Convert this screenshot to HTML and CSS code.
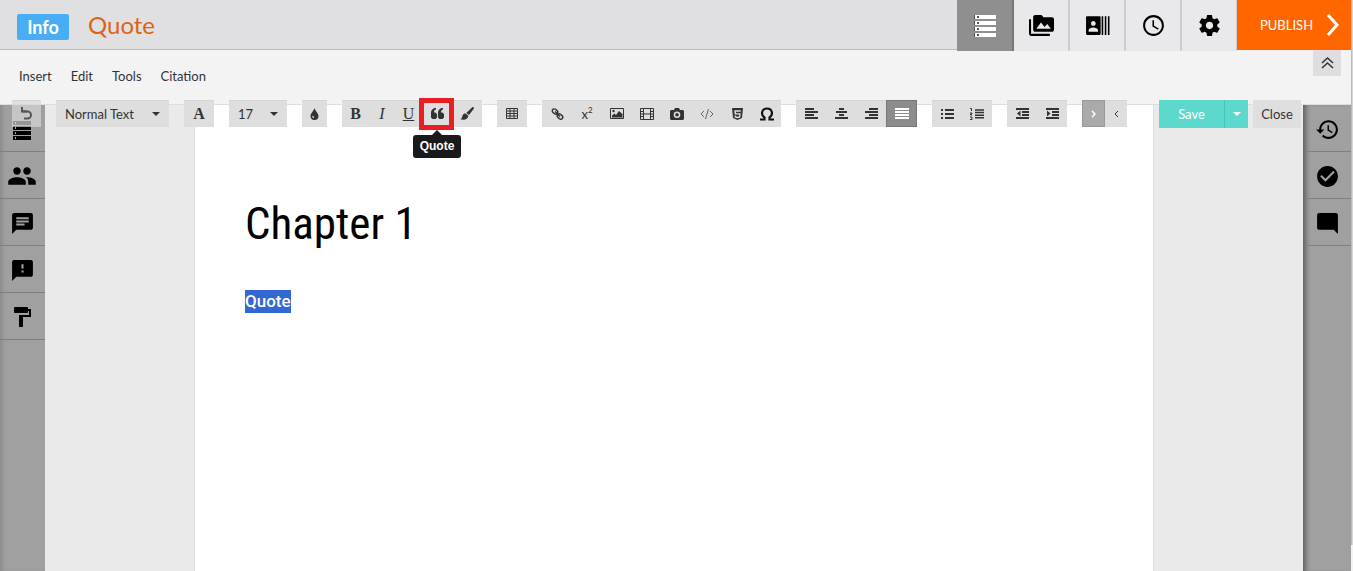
FILE: index.html
```html
<!DOCTYPE html>
<html lang="en">
<head>
  <meta charset="UTF-8" />
  <meta name="viewport" content="width=device-width, initial-scale=1.0"/>
  <title>Quote</title>
  <link rel="stylesheet" href="styles.css">
</head>
<body>
  <div class="app">
    <header class="topbar">
      <button class="info">Info</button>
      <h1>Quote</h1>
      <nav class="tabs">
        <button class="tab active" aria-label="Structure">
          <svg width="24" height="24" viewBox="0 0 24 24"><path d="M1 1h22v4H1zM1 7h22v4H1zM1 13h22v4H1zM1 19h22v4H1z"/><path fill="#555" d="M1 1h1v4H1zM1 7h1v4H1zM1 13h1v4H1zM1 19h1v4H1zM4 2h2v2H4zM4 8h2v2H4zM4 14h2v2H4zM4 20h2v2H4z"/></svg>
        </button>
        <button class="tab" aria-label="Media">
          <svg width="25" height="25" viewBox="0 0 24 24"><path d="M2 6H0v14c0 1.1.9 2 2 2h18v-2H2V6zm20-2h-8l-2-2H6c-1.1 0-2 .9-2 2v12c0 1.1.9 2 2 2h16c1.1 0 2-.9 2-2V6c0-1.1-.9-2-2-2zM7 15l4.5-6 3.5 4.51 2.5-3.01L21 15H7z"/></svg>
        </button>
        <button class="tab" aria-label="Contributors">
          <svg width="25" height="25" viewBox="0 0 24 24"><path d="M22 3v18h1.500V3zM19 3v18h1.500V3zM16 3v18h1.500V3zM14 3H2c-.55 0-1 .45-1 1v16c0 .55.45 1 1 1h12c.55 0 1-.45 1-1V4c0-.55-.45-1-1-1zM8 7.750c1.240 0 2.250 1 2.250 2.250S9.240 12.250 8 12.250 5.750 11.240 5.750 10 6.760 7.750 8 7.750zM12.500 18h-9v-1.500c0-1.500 3-2.500 4.500-2.500s4.500 1 4.500 2.500z"/></svg>
        </button>
        <button class="tab" aria-label="History">
          <svg width="25" height="25" viewBox="0 0 24 24"><path d="M12 2C6.480 2 2 6.480 2 12s4.480 10 10 10 10-4.480 10-10S17.520 2 12 2zm0 18c-4.420 0-8-3.580-8-8s3.580-8 8-8 8 3.580 8 8-3.580 8-8 8zM12.500 7H11v6l5.250 3.150.750-1.230-4.500-2.670z"/></svg>
        </button>
        <button class="tab" aria-label="Settings">
          <svg width="25" height="25" viewBox="0 0 24 24"><path d="M19.430 12.980c.04-.32.07-.64.07-.98s-.03-.66-.07-.98l2.110-1.650c.19-.15.24-.42.12-.64l-2-3.460c-.12-.22-.39-.3-.61-.22l-2.490 1c-.52-.4-1.080-.73-1.690-.98l-.38-2.650C14.460 2.180 14.250 2 14 2h-4c-.25 0-.46.18-.49.42l-.38 2.650c-.61.25-1.170.59-1.690.98l-2.490-1c-.23-.09-.49 0-.61.22l-2 3.460c-.13.22-.07.49.12.64l2.110 1.650c-.04.32-.07.65-.07.98s.03.66.07.98l-2.110 1.650c-.19.15-.24.42-.12.64l2 3.460c.12.22.39.3.61.22l2.490-1c.52.4 1.080.73 1.690.98l.38 2.650c.03.24.24.42.49.42h4c.25 0 .46-.18.49-.42l.38-2.650c.61-.25 1.170-.59 1.690-.98l2.490 1c.23.09.49 0 .61-.22l2-3.460c.12-.22.07-.49-.12-.64l-2.110-1.650zM12 15.500c-1.930 0-3.500-1.570-3.500-3.500s1.570-3.500 3.500-3.500 3.500 1.570 3.500 3.500-1.570 3.500-3.500 3.500z"/></svg>
        </button>
      </nav>
      <button class="publish">PUBLISH
        <svg width="14" height="24" viewBox="0 0 14 24"><path class="line" stroke-width="3" d="M2 2l9 10-9 10"/></svg>
      </button>
    </header>

    <nav class="menubar">
      <a href="#">Insert</a>
      <a href="#">Edit</a>
      <a href="#">Tools</a>
      <a href="#">Citation</a>
      <button class="collapse" aria-label="Collapse">
        <svg width="13" height="12" viewBox="0 0 13 12"><path class="line" stroke-width="1.500" d="M1 6l5.500-5L12 6M1 11l5.500-5 5.500 5"/></svg>
      </button>
    </nav>

    <div class="workspace">
      <div class="toolbar">
        <div class="group undo">
          <button aria-label="Undo"><svg width="12" height="13" viewBox="0 0 12 13"><path class="line" stroke-width="2" d="M1.500 4.500h5a3.500 3.500 0 0 1 0 7H3"/><path d="M0 0h2v3.500h4v2H0z"/></svg></button>
        </div>
        <div class="group select">
          <select class="style-select" aria-label="Text style"><option>Normal Text</option></select>
          <svg width="8" height="4" viewBox="0 0 8 4"><path d="M0 0h8L4 4z"/></svg>
        </div>
        <div class="group"><button class="serif bold" aria-label="Font">A</button></div>
        <div class="group select">
          <select class="size-select" aria-label="Font size"><option>17</option></select>
          <svg width="8" height="4" viewBox="0 0 8 4"><path d="M0 0h8L4 4z"/></svg>
        </div>
        <div class="group drop">
          <button aria-label="Color"><svg width="9" height="12" viewBox="0 0 9 12"><path d="M4.500 0C5 3 8.500 5 8.500 8a4 4 0 0 1-8 0C.5 5 4 3 4.500 0zM2.500 7.500c-.8 1 0 2.500 1.500 2.500V8.500c-.8 0-1.200-.4-1.500-1z"/></svg></button>
        </div>
        <div class="group marks">
          <button class="serif strong">B</button>
          <button class="serif italic">I</button>
          <button class="serif underline">U</button>
          <button class="quote" aria-label="Quote" aria-describedby="tip">
            <svg width="13" height="11" viewBox="0 0 13 11"><path d="M5 0v1.600C3.700 1.900 3 2.800 3 4.500h1.500L6 6v3.500L4.500 11h-3L0 9.500V5C0 2 2 0 5 0zM12 0v1.600c-1.300.3-2 1.200-2 2.900h1.500L13 6v3.500L11.500 11h-3L7 9.500V5c0-3 2-5 5-5z"/></svg>
            <span class="tooltip" id="tip" role="tooltip">Quote</span>
          </button>
          <button aria-label="Brush"><svg width="14" height="13" viewBox="0 0 14 13"><path d="M13.500.3c.6.5.5 1 .1 1.600L9 8 6.300 6 12 .5c.5-.5 1-.6 1.500-.2zM5.600 6.600l2.700 2.100c.1 3-3.800 5.300-8.300 3.400 2.200-.4 1.900-2 2.600-3.700.6-1.400 1.800-2 3-1.800z"/></svg></button>
        </div>
        <div class="group">
          <button aria-label="Table"><svg width="12" height="11" viewBox="0 0 12 11"><path class="line" d="M.5.5h11v10H.5zM0 3h12M0 5.500h12M0 8h12M4 0v11M8 0v11"/></svg></button>
        </div>
        <div class="group insert">
          <button aria-label="Link"><svg width="13" height="12" viewBox="0 0 13 12"><g class="line" stroke-width="1.400"><rect x="1" y="1.500" width="6" height="4" rx="2" transform="rotate(40 4 3.500)"/><rect x="6" y="6.500" width="6" height="4" rx="2" transform="rotate(40 9 8.500)"/><path d="M4 3.500l5 5"/></g></svg></button>
          <button class="math">x<sup>2</sup></button>
          <button aria-label="Image"><svg width="14" height="11" viewBox="0 0 14 11"><path class="line" d="M.5.5h13v10H.5z"/><path d="M2 9.500V7.500L4.500 5.500 6 7l3-4 3.500 3v3.500z"/><circle cx="3.500" cy="3" r="1.200"/></svg></button>
          <button aria-label="Video"><svg width="14" height="12" viewBox="0 0 14 12"><path class="line" d="M.5.5h13v11H.5zM3.500 0v12M10.500 0v12M3.500 6h7M0 3.500h3.500M0 6h3.500M0 8.500h3.500M10.500 3.500H14M10.500 6H14M10.500 8.500H14"/></svg></button>
          <button aria-label="Camera"><svg width="14" height="12" viewBox="0 0 14 12"><path fill-rule="evenodd" d="M4 2l1-2h4l1 2h3l1 1v8l-1 1H1l-1-1V3l1-1zM7 3.500a3.300 3.300 0 1 0 0 6.600 3.300 3.300 0 0 0 0-6.600zM7 5a1.800 1.800 0 1 1 0 3.600A1.800 1.800 0 0 1 7 5z"/></svg></button>
          <button class="code" aria-label="Code"><svg width="14" height="10" viewBox="0 0 14 10"><path class="line" d="M4 2L1 5l3 3M10 2l3 3-3 3M8.500 0l-3 10"/></svg></button>
          <button aria-label="HTML"><svg width="11" height="12" viewBox="0 0 11 12"><path fill-rule="evenodd" d="M0 0h11l-1 10-4.500 2L1 10zM2.300 2.300l.4 4.200h4.600l-.2 1.700-1.600.5-1.600-.5-.1-.8H2.500l.2 2 2.800.9 2.800-.9.4-4.200H4.100L4 3.700h4.700l.1-1.400z"/></svg></button>
          <button aria-label="Symbol"><svg width="14" height="14" viewBox="0 0 14 14"><path class="line" stroke-width="2.200" d="M0 12.500h4.500v-2C.5 8 1.500 1.500 7 1.500S13.500 8 9.500 10.500v2H14"/></svg></button>
        </div>
        <div class="group">
          <button aria-label="Align left"><svg width="13" height="11" viewBox="0 0 13 11"><path class="line" stroke-width="2" d="M0 1h9M0 4h13M0 7h9M0 10h13"/></svg></button>
          <button aria-label="Center"><svg width="13" height="11" viewBox="0 0 13 11"><path class="line" stroke-width="2" d="M4 1h5M1 4h11M4 7h5M0 10h13"/></svg></button>
          <button aria-label="Align right"><svg width="13" height="11" viewBox="0 0 13 11"><path class="line" stroke-width="2" d="M4 1h9M0 4h13M4 7h9M0 10h13"/></svg></button>
          <button class="active" aria-label="Justify"><svg width="14" height="11" viewBox="0 0 14 11"><path class="line" stroke-width="2" d="M0 1h14M0 4h14M0 7h14M0 10h14"/></svg></button>
        </div>
        <div class="group">
          <button aria-label="Bulleted list"><svg width="13" height="10" viewBox="0 0 13 10"><path class="line" stroke-width="2" d="M0 1h2M4 1h9M0 5h2M4 5h9M0 9h2M4 9h9"/></svg></button>
          <button aria-label="Numbered list"><svg width="14" height="12" viewBox="0 0 14 12"><path class="line" stroke-width="1.500" d="M5 2h9M5 4.600h9M5 7.200h9M5 9.800h9"/><path class="line" d="M0 .5h1.500V3M0 5h2v1H.5v1H2M0 9h2v2.500H0"/></svg></button>
        </div>
        <div class="group">
          <button aria-label="Outdent"><svg width="13" height="11" viewBox="0 0 13 11"><path class="line" stroke-width="2" d="M0 1h13M6 4h7M6 7h7M0 10h13"/><path d="M4.500 2.500v6L1 5.500z"/></svg></button>
          <button aria-label="Indent"><svg width="13" height="11" viewBox="0 0 13 11"><path class="line" stroke-width="2" d="M0 1h13M6 4h7M6 7h7M0 10h13"/><path d="M1 2.500v6l3.500-3z"/></svg></button>
        </div>
        <div class="group direction">
          <button class="pressed" aria-label="Left to right"><svg width="5" height="8" viewBox="0 0 5 8"><path class="line" stroke-width="1.500" d="M1 1l3 3-3 3"/></svg></button>
          <button aria-label="Right to left"><svg width="5" height="8" viewBox="0 0 5 8"><path class="line" d="M4 1L1 4l3 3"/></svg></button>
        </div>
        <div class="actions">
          <button class="save">Save</button>
          <button class="save-more" aria-label="More save options"><svg width="8" height="4" viewBox="0 0 8 4"><path d="M0 0h8L4 4z"/></svg></button>
          <button class="close">Close</button>
        </div>
      </div>

      <aside class="sidebar left">
        <button class="structure" aria-label="Structure"><svg width="18" height="19" viewBox="0 0 18 19"><path d="M0 0h18v4H0zM0 5h18v4H0zM0 10h18v4H0zM0 15h18v4H0z"/><path fill="#aaa" d="M2 1h1v2H2zM2 6h1v2H2zM2 11h1v2H2zM2 16h1v2H2z"/></svg></button>
        <button aria-label="People"><svg width="30" height="30" viewBox="0 0 24 24"><path d="M16 11c1.660 0 2.990-1.340 2.990-3S17.660 5 16 5s-3 1.340-3 3 1.340 3 3 3zm-8 0c1.660 0 2.990-1.340 2.990-3S9.660 5 8 5 5 6.340 5 8s1.340 3 3 3zm0 2c-2.330 0-7 1.170-7 3.500V19h14v-2.500c0-2.330-4.670-3.500-7-3.500zm8 0c-.29 0-.62.02-.97.05 1.160.84 1.970 1.970 1.970 3.450V19h6v-2.500c0-2.330-4.670-3.500-7-3.500z"/></svg></button>
        <button aria-label="Chat"><svg width="25" height="25" viewBox="0 0 24 24"><path d="M20 2H4c-1.100 0-2 .9-2 2v18l4-4h14c1.100 0 2-.9 2-2V4c0-1.100-.9-2-2-2zM6 9h12v2H6V9zm8 5H6v-2h8v2zm4-6H6V6h12v2z"/></svg></button>
        <button aria-label="Feedback"><svg width="25" height="25" viewBox="0 0 24 24"><path d="M20 2H4c-1.100 0-2 .9-2 2v18l4-4h14c1.100 0 2-.9 2-2V4c0-1.100-.9-2-2-2zm-7 12h-2v-2h2v2zm0-4h-2V6h2v4z"/></svg></button>
        <button aria-label="Theme"><svg width="24" height="24" viewBox="0 0 24 24"><path d="M18 4V3c0-.55-.45-1-1-1H5c-.55 0-1 .45-1 1v4c0 .55.45 1 1 1h12c.55 0 1-.45 1-1V6h1v4H9v11c0 .55.45 1 1 1h2c.55 0 1-.45 1-1v-9h8V4h-3z"/></svg></button>
      </aside>

      <main class="canvas">
        <article class="page">
          <h2>Chapter 1</h2>
          <p><mark>Quote</mark></p>
        </article>
      </main>

      <aside class="sidebar right">
        <button aria-label="Revisions"><svg width="25" height="25" viewBox="0 0 24 24"><path d="M13 3c-4.970 0-9 4.030-9 9H1l3.890 3.890.07.14L9 12H6c0-3.870 3.130-7 7-7s7 3.130 7 7-3.130 7-7 7c-1.930 0-3.680-.79-4.940-2.060l-1.420 1.420C8.270 19.990 10.510 21 13 21c4.970 0 9-4.030 9-9s-4.030-9-9-9zm-1 5v5l4.280 2.540.72-1.210-3.500-2.080V8H12z"/></svg></button>
        <button aria-label="Approve"><svg width="25" height="25" viewBox="0 0 24 24"><path d="M12 2C6.480 2 2 6.480 2 12s4.480 10 10 10 10-4.480 10-10S17.520 2 12 2zm-2 15l-5-5 1.410-1.410L10 14.170l7.590-7.590L19 8l-9 9z"/></svg></button>
        <button aria-label="Comment"><svg width="25" height="25" viewBox="0 0 24 24"><path d="M22 4c0-1.100-.9-2-2-2H4c-1.100 0-2 .9-2 2v12c0 1.100.9 2 2 2h14l4 4V4z"/></svg></button>
      </aside>
    </div>
  </div>
  <div class="rail"></div>
</body>
</html>
```

FILE: styles.css
```css
*,
*::before {
  box-sizing: border-box;
}

body {
  display: flex;
  min-height: 100vh;
  margin: 0;
  font-family: Lato, sans-serif;
  font-size: 13px;
  color: #333;
  background: #f3f3f3;
}

button,
select {
  margin: 0;
  padding: 0;
  border: 0;
  border-radius: 0;
  background: none;
  color: inherit;
  font-family: inherit;
  font-size: 13px;
  cursor: pointer;
}

svg {
  display: block;
  fill: currentColor;
}

.line {
  fill: none;
  stroke: currentColor;
}

.app {
  flex: 1;
  display: flex;
  flex-direction: column;
}

.rail {
  width: 2px;
  height: 545px;
  background: #d6d6d6;
  border-left: 1px solid #bbb;
}

/* top bar */
.topbar {
  display: flex;
  height: 50px;
  padding-left: 17px;
  background: #e0e0e2;
  box-shadow: inset 0 -1px #bbb;
}

.info {
  width: 52px;
  height: 26px;
  margin-top: 14px;
  border-radius: 2px;
  background: #47aef5;
  color: #fff;
  font-size: 18px;
  font-weight: bold;
}

h1 {
  margin: 9px 0 0 19px;
  color: #dc6414;
  font-size: 24px;
  line-height: 32px;
  font-weight: normal;
}

.tabs {
  display: flex;
  height: 51px;
  margin-left: auto;
}

.tab {
  display: flex;
  align-items: center;
  justify-content: center;
  width: 56px;
  background: #e9e9eb;
  border-right: 2px solid #ccc;
  color: #000;
}

.tab.active {
  width: 57px;
  background: #8f8f8f;
  border-color: #777;
  color: #fff;
}

.tab:last-child {
  width: 55px;
  border-right-width: 1px;
}

.publish {
  display: flex;
  align-items: center;
  justify-content: space-between;
  width: 114px;
  padding: 0 11px 0 23px;
  background: #ff6600;
  color: #fff;
}

/* menu */
.menubar {
  display: flex;
  height: 55px;
  padding: 0 10px 0 19px;
  gap: 19px;
  line-height: 52px;
  border-bottom: 1px solid #ddd;
}

.menubar a {
  color: #333;
  text-decoration: none;
}

.collapse {
  display: flex;
  align-items: center;
  justify-content: center;
  width: 28px;
  height: 26px;
  margin-left: auto;
  background: #dedee0;
}

/* toolbar lies over the top edge of the workspace */
.workspace {
  position: relative;
  flex: 1;
  display: flex;
}

.toolbar {
  position: absolute;
  z-index: 2;
  top: -5px;
  left: 0;
  right: 0;
  display: flex;
  gap: 15px;
  padding: 0 50px 0 12px;
}

.group {
  display: flex;
  height: 27px;
  background: #dedede;
  box-shadow: inset 0 1px #d4d4d4;
}

.group button {
  display: flex;
  align-items: center;
  justify-content: center;
  width: 30px;
}

.undo {
  background: rgba(214, 214, 214, 0.7);
}

.undo button {
  width: 29px;
  color: #555;
}

.select {
  align-items: center;
  position: relative;
}

.select select {
  appearance: none;
  height: 27px;
  padding-left: 9px;
}

.select svg {
  position: absolute;
  right: 9px;
  pointer-events: none;
}

.style-select {
  width: 113px;
}

.size-select {
  width: 58px;
}

.group .serif {
  width: 27px;
  font-family: "Liberation Serif", serif;
  font-size: 16px;
}

.group .bold {
  width: 30px;
  font-weight: bold;
}

.group .strong {
  font-weight: bold;
}

.group .italic {
  width: 26px;
  font-style: italic;
}

.group .underline {
  text-decoration: underline;
}

.drop button {
  width: 25px;
}

.insert button:last-child {
  width: 29px;
  color: #111;
}

.math sup {
  align-self: flex-start;
  margin-top: 6px;
  font-size: 8px;
  line-height: 8px;
}

.group .code {
  color: #666;
}

.group .active {
  width: 31px;
  background: #8c8c8c;
  border: 1px solid #777;
  color: #fff;
}

.direction button {
  width: 22px;
}

.direction .pressed {
  width: 23px;
  background: #aaa;
  border: 1px solid #999;
  color: #fff;
}

.quote {
  position: relative;
}

.quote::before {
  content: "";
  position: absolute;
  top: -2px;
  left: -3px;
  width: 35px;
  height: 32px;
  border: 5px solid #ec1c24;
}

.tooltip {
  position: absolute;
  top: 35px;
  left: -9px;
  width: 48px;
  border-radius: 3px;
  background: #1a1a1a;
  color: #fff;
  font-family: "Liberation Sans", sans-serif;
  font-size: 12px;
  font-weight: bold;
  line-height: 23px;
  text-align: center;
}

.tooltip::before {
  content: "";
  position: absolute;
  top: -5px;
  left: 19px;
  border: 5px solid transparent;
  border-top: 0;
  border-bottom-color: #1a1a1a;
}

.actions {
  display: flex;
  height: 28px;
  margin-left: auto;
}

.save {
  width: 66px;
  background: #5cd9cc;
  border-right: 1px solid #44c5b8;
  color: #fff;
}

.save-more {
  display: flex;
  align-items: center;
  justify-content: center;
  width: 23px;
  background: #5cd9cc;
  color: #fff;
}

.close {
  width: 48px;
  margin-left: 5px;
  background: #dfdfdf;
}

/* side panels */
.sidebar {
  display: flex;
  flex-direction: column;
  width: 45px;
  background: #a0a0a0;
  box-shadow: inset 5px 0 5px -3px #888;
}

.sidebar button {
  display: flex;
  align-items: center;
  justify-content: center;
  height: 47px;
  padding: 2px 1px 0 0;
  border-bottom: 1px solid #808080;
  color: #000;
}

.sidebar .structure {
  padding-top: 4px;
}

.sidebar.right {
  width: 48px;
  padding-left: 2px;
  box-shadow: inset 6px 0 5px -3px #606060;
}

.canvas {
  flex: 1;
  display: flex;
  padding: 0 149px;
  background: #eaeaea;
}

.page {
  flex: 1;
  padding: 90px 50px;
  background: #fff;
  border: solid #ddd;
  border-width: 0 1px;
}

.page h2 {
  margin: 0;
  color: #000;
  font-family: "Roboto Condensed", "Liberation Sans Narrow", Roboto, sans-serif;
  font-size: 45px;
  line-height: 58px;
  font-weight: normal;
}

.page p {
  margin: 37px 0 0;
  font-family: Roboto, sans-serif;
  font-size: 17px;
  line-height: 23px;
}

.page mark {
  display: inline-block;
  background: #3367d1;
  color: #fff;
  font-weight: 500;
}
```
